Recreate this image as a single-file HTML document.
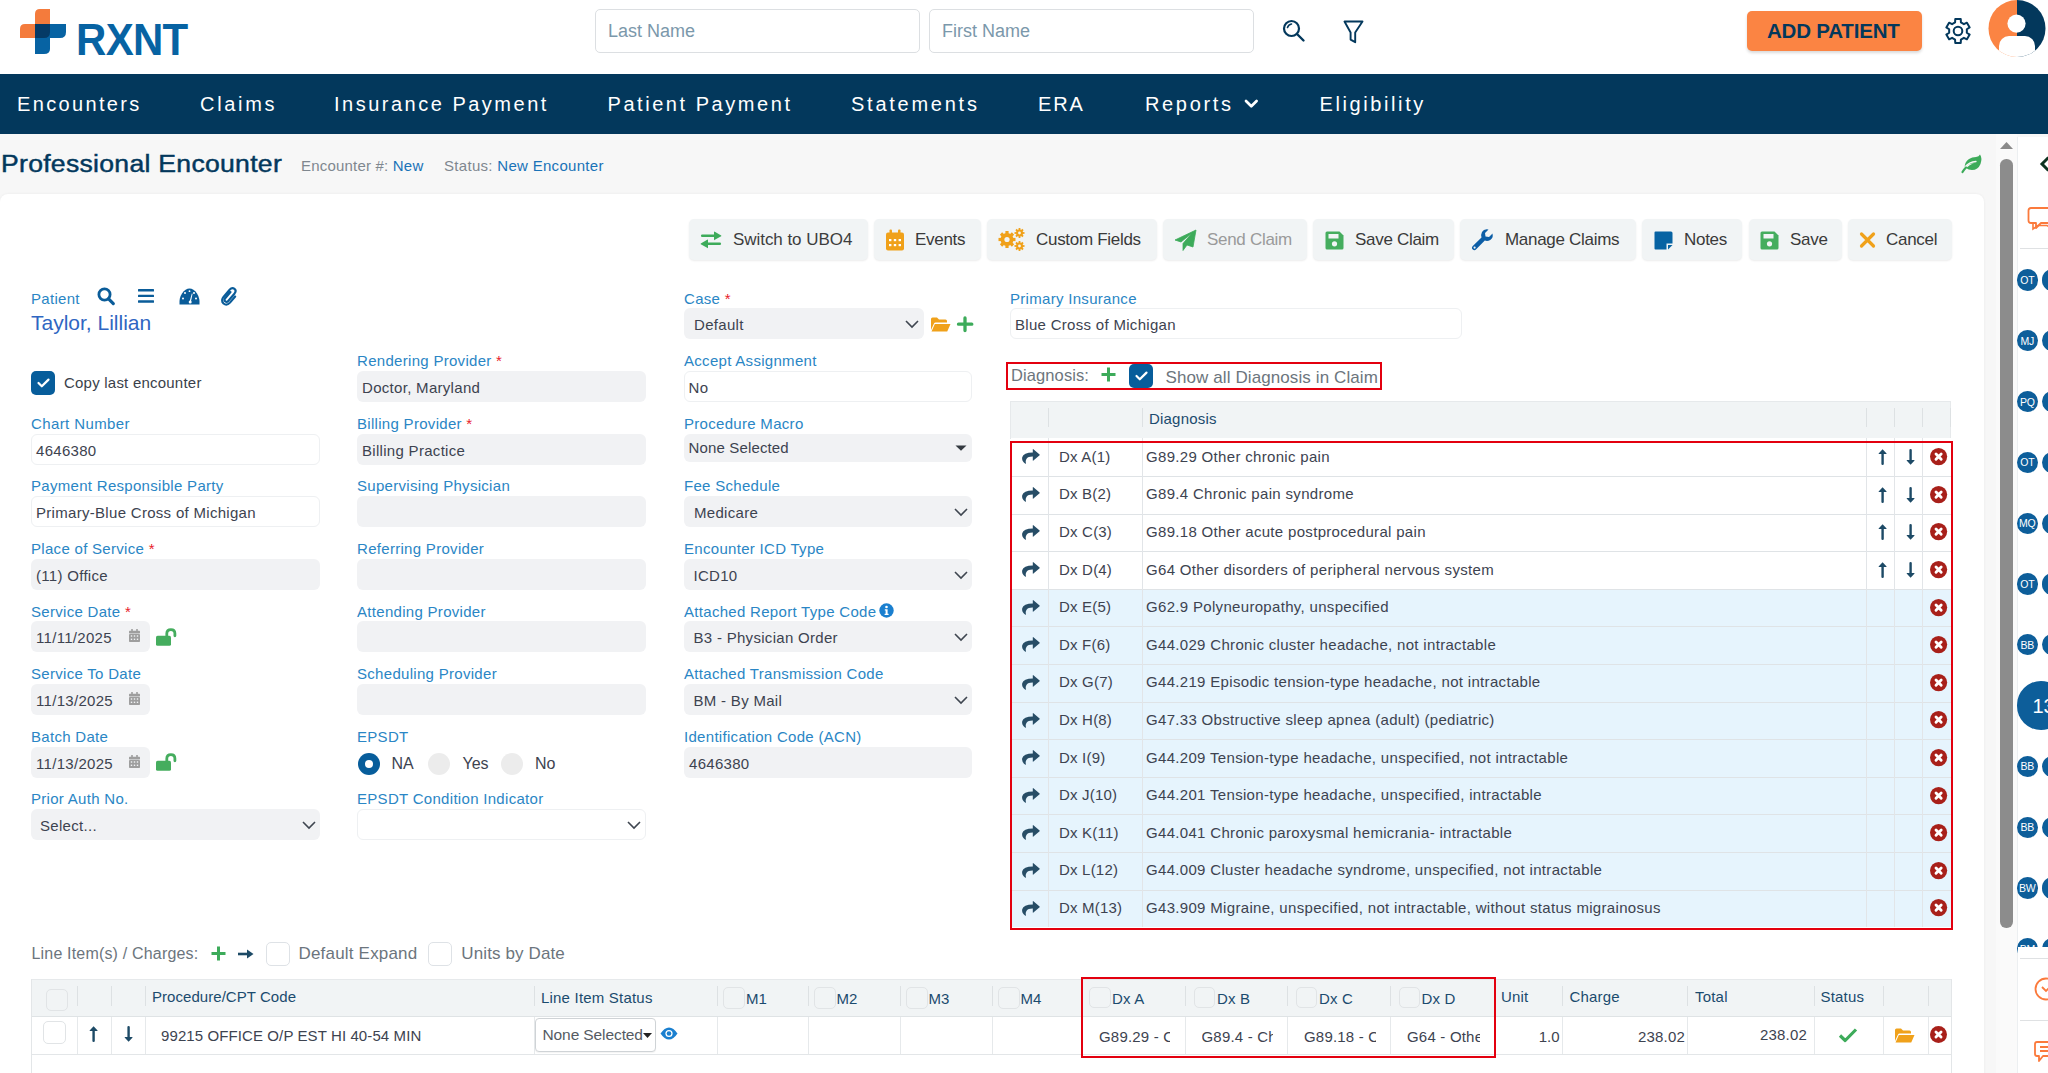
<!DOCTYPE html>
<html><head><meta charset="utf-8">
<style>
*{box-sizing:border-box;margin:0;padding:0}
html,body{width:2048px;height:1073px;overflow:hidden;background:#f7f7f7;font-family:"Liberation Sans",sans-serif;position:relative}
.a{position:absolute}
.t{position:absolute;white-space:nowrap;line-height:1}
svg{position:absolute;overflow:visible}
#hdr{left:0;top:0;width:2048px;height:74px;background:#fff}
#nav{left:0;top:74px;width:2048px;height:60px;background:#03385c}
.nv{color:#fff;font-size:20px;letter-spacing:1.85px;top:94px}
.inp{background:#fff;border:1px solid #dcdfe2;border-radius:5px}
.ph{color:#7b98ab;font-size:18px}
#card{left:0;top:194px;width:1984px;height:900px;background:#fff;border-radius:8px;box-shadow:0 0 3px rgba(0,0,0,.06)}
.btn{position:absolute;top:219px;height:41px;background:#f1f4f5;border-radius:5px;box-shadow:0 1px 2px rgba(0,0,0,.08)}
.bt{color:#3a3a3a;font-size:17px;top:231px;letter-spacing:-0.3px}
.lbl{color:#2a86c5;font-size:15px}
.req{color:#e8202a;font-size:15px}
.box{position:absolute;height:31px;border-radius:6px;background:#f1f2f4}
.wbox{position:absolute;height:31px;border-radius:6px;background:#fff;border:1px solid #eef0f2}
.val{color:#3d4350;font-size:15px}
.th{color:#1b4b6e;font-size:15px}
.dg{color:#3d4350;font-size:15px}
</style></head><body>
<!-- HEADER -->
<div id="hdr" class="a"></div>
<svg style="left:0;top:0" width="200" height="70">
  <path d="M35 24 V14 Q35 9 40 9 H50 V38 H20 V29 Q20 24 25 24 Z" fill="#f47b3c"/>
  <path d="M35 24 H66 V32 Q66 38 60 38 H50 V49 Q50 54 44 54 H35 Z" fill="#0763a3"/>
  <path d="M35 24 H50 V32 Q50 38 44 38 H35 Z" fill="#053a66"/>
</svg>
<div class="t" style="left:76px;top:17.5px;font-size:42px;font-weight:700;color:#0763a3;letter-spacing:-0.7px;transform:scaleY(1.07);transform-origin:0 0">RXNT</div>

<div class="a inp" style="left:595px;top:9px;width:325px;height:44px"></div>
<div class="t ph" style="left:608px;top:22px">Last Name</div>
<div class="a inp" style="left:929px;top:9px;width:325px;height:44px"></div>
<div class="t ph" style="left:942px;top:22px">First Name</div>

<!-- search icon -->
<svg style="left:1282px;top:19px" width="24" height="24" viewBox="0 0 24 24"><circle cx="9.5" cy="9.5" r="7.5" fill="none" stroke="#03385c" stroke-width="2.2"/><path d="M15 15 L21.5 21.5" stroke="#03385c" stroke-width="2.4" stroke-linecap="round"/><path d="M5.5 8.5 Q6.5 5.5 9.5 5" fill="none" stroke="#03385c" stroke-width="1.6" stroke-linecap="round"/></svg>
<!-- filter icon -->
<svg style="left:1343px;top:20px" width="22" height="24" viewBox="0 0 22 24"><path d="M1.5 1.5 H19.5 L12.2 12.5 V22.2 L7.6 19.6 V12.5 Z" fill="none" stroke="#03385c" stroke-width="1.9" stroke-linejoin="round"/></svg>

<div class="a" style="left:1747px;top:11px;width:175px;height:40px;background:#fb8443;border-radius:5px;box-shadow:0 2px 3px rgba(0,0,0,.15)"></div>
<div class="t" style="left:1767px;top:20.8px;font-size:20.5px;font-weight:700;color:#03385c;letter-spacing:-0.2px">ADD PATIENT</div>

<!-- gear -->
<svg style="left:1945px;top:18px" width="26" height="26" viewBox="0 0 26 26"><path d="M10.07 4.49 L10.26 1.11 L15.74 1.11 L15.93 4.49 L18.90 6.21 L21.92 4.68 L24.67 9.43 L21.83 11.28 L21.83 14.72 L24.67 16.57 L21.92 21.32 L18.90 19.79 L15.93 21.51 L15.74 24.89 L10.26 24.89 L10.07 21.51 L7.10 19.79 L4.08 21.32 L1.33 16.57 L4.17 14.72 L4.17 11.28 L1.33 9.43 L4.08 4.68 L7.10 6.21 Z" fill="none" stroke="#03385c" stroke-width="2" stroke-linejoin="round"/><circle cx="13" cy="13" r="4.3" fill="none" stroke="#03385c" stroke-width="2"/></svg>
<!-- avatar -->
<svg style="left:1987px;top:0px" width="61" height="58" viewBox="0 0 61 58">
  <defs><clipPath id="avc"><circle cx="30" cy="28.5" r="28.5"/></clipPath></defs>
  <g clip-path="url(#avc)">
    <rect x="0" y="0" width="30" height="58" fill="#fb8443"/>
    <rect x="30" y="0" width="31" height="58" fill="#03385c"/>
    <circle cx="29.5" cy="23.6" r="9.1" fill="#fff"/>
    <rect x="12" y="36" width="36" height="30" rx="10" fill="#fff"/>
  </g>
</svg>

<!-- NAV -->
<div id="nav" class="a"></div>
<div class="t nv" style="left:17px;letter-spacing:2.35px">Encounters</div>
<div class="t nv" style="left:200px;letter-spacing:2.7px">Claims</div>
<div class="t nv" style="left:334px;letter-spacing:2.5px">Insurance Payment</div>
<div class="t nv" style="left:607.5px;letter-spacing:2.55px">Patient Payment</div>
<div class="t nv" style="left:851px;letter-spacing:2.75px">Statements</div>
<div class="t nv" style="left:1038px">ERA</div>
<div class="t nv" style="left:1145px;letter-spacing:2.65px">Reports</div>
<svg style="left:1244px;top:98.5px" width="15" height="10" viewBox="0 0 15 10"><path d="M2 2 L7.3 7.3 L12.6 2" fill="none" stroke="#fff" stroke-width="2.7" stroke-linecap="round" stroke-linejoin="round"/></svg>
<div class="t nv" style="left:1319.5px;letter-spacing:2.6px">Eligibility</div>

<!-- TITLE -->
<div class="t" style="left:1px;top:153.2px;font-size:23px;font-weight:400;-webkit-text-stroke:0.45px #03385c;color:#03385c;letter-spacing:0.25px;transform:scaleX(1.155);transform-origin:0 0">Professional Encounter</div>
<div class="t" style="left:301px;top:157.5px;font-size:15px;color:#7f878f;letter-spacing:0.2px">Encounter #: <span style="color:#1a73b8">New</span></div>
<div class="t" style="left:444px;top:157.5px;font-size:15px;color:#7f878f;letter-spacing:0.3px">Status: <span style="color:#1a73b8">New Encounter</span></div>

<!-- CARD -->
<div id="card" class="a"></div>

<!--TOOLBAR-->
<div class="btn" style="left:689px;width:179px"></div>
<svg style="left:700px;top:229px" width="22" height="22" viewBox="0 0 22 22"><path d="M2.2 6.8 H16" stroke="#3dab5a" stroke-width="2.5" stroke-linecap="round"/><path d="M14 2.6 Q14 2.2 14.4 2.4 L21.2 6.4 Q21.6 6.8 21.2 7.2 L14.4 11.1 Q14 11.3 14 10.9 Z" fill="#3dab5a"/><path d="M6 14.8 H19.8" stroke="#3dab5a" stroke-width="2.5" stroke-linecap="round"/><path d="M8 10.7 Q8 10.3 7.6 10.5 L0.8 14.4 Q0.4 14.8 0.8 15.2 L7.6 19.1 Q8 19.3 8 18.9 Z" fill="#3dab5a"/></svg>
<div class="t bt" style="left:733px;letter-spacing:-0.05px;color:#3d3d3d">Switch to UBO4</div>

<div class="btn" style="left:874px;width:107px"></div>
<svg style="left:885px;top:229px" width="20" height="22" viewBox="0 0 20 22"><rect x="1" y="3.5" width="18" height="18" rx="2" fill="#f0a11a"/><rect x="4.5" y="0.5" width="2.5" height="5" rx="1" fill="#f0a11a"/><rect x="13" y="0.5" width="2.5" height="5" rx="1" fill="#f0a11a"/><g fill="#fff"><rect x="4" y="10" width="2.4" height="2.2"/><rect x="8.8" y="10" width="2.4" height="2.2"/><rect x="13.6" y="10" width="2.4" height="2.2"/><rect x="4" y="15" width="2.4" height="2.2"/><rect x="8.8" y="15" width="2.4" height="2.2"/><rect x="13.6" y="15" width="2.4" height="2.2"/></g></svg>
<div class="t bt" style="left:915px">Events</div>

<div class="btn" style="left:987px;width:170px"></div>
<svg style="left:998px;top:228px" width="27" height="23" viewBox="0 0 27 23"><g fill="#f0a11a"><circle cx="9" cy="11.5" r="6.5"/><g stroke="#f0a11a" stroke-width="3.2" stroke-linecap="butt"><path d="M9 3 V20"/><path d="M0.5 11.5 H17.5"/><path d="M3 5.5 L15 17.5"/><path d="M15 5.5 L3 17.5"/></g><circle cx="21.5" cy="5" r="3.5"/><circle cx="21.5" cy="18" r="3.5"/><g stroke="#f0a11a" stroke-width="1.8"><path d="M21.5 0 V10"/><path d="M16.5 5 H26.5"/><path d="M18 1.5 L25 8.5"/><path d="M25 1.5 L18 8.5"/><path d="M21.5 13 V23"/><path d="M16.5 18 H26.5"/><path d="M18 14.5 L25 21.5"/><path d="M25 14.5 L18 21.5"/></g></g><circle cx="9" cy="11.5" r="2.6" fill="#f1f4f5"/><circle cx="21.5" cy="5" r="1.4" fill="#f1f4f5"/><circle cx="21.5" cy="18" r="1.4" fill="#f1f4f5"/></svg>
<div class="t bt" style="left:1036px">Custom Fields</div>

<div class="btn" style="left:1163px;width:144px"></div>
<svg style="left:1174px;top:229px" width="23" height="22" viewBox="0 0 23 22"><path d="M22 1 L1 11 L7 13 L18 4 L9 14.5 V21.5 L13 16 L19 18 Z" fill="#3dab5a" stroke="#3dab5a" stroke-width="0.8" stroke-linejoin="round"/></svg>
<div class="t bt" style="left:1207px;color:#9a9a9a">Send Claim</div>

<div class="btn" style="left:1313px;width:141px"></div>
<svg style="left:1325px;top:231px" width="19" height="19" viewBox="0 0 19 19"><path d="M2 0.5 H14.5 L18.5 4.5 V17 Q18.5 18.5 17 18.5 H2 Q0.5 18.5 0.5 17 V2 Q0.5 0.5 2 0.5 Z" fill="#45ad5e"/><rect x="3.5" y="3" width="10" height="4.5" fill="#f1f4f5"/><circle cx="9.5" cy="12.8" r="2.6" fill="#f1f4f5"/></svg>
<div class="t bt" style="left:1355px">Save Claim</div>

<div class="btn" style="left:1460px;width:176px"></div>
<svg style="left:1471px;top:229px" width="23" height="22" viewBox="0 0 23 22"><path d="M21.5 4.5 L18 8 L14.5 7.5 L14 4 L17.5 0.5 Q13 -0.5 11 3 Q9.5 6 10.5 8.5 L1.8 17 Q0 19 1.8 20.5 Q3.5 22 5.2 20.2 L13.8 11.5 Q16.5 12.5 19.2 11 Q22.5 9 21.5 4.5 Z" fill="#0d5ea6"/><circle cx="3.6" cy="18.6" r="1.1" fill="#f1f4f5"/></svg>
<div class="t bt" style="left:1505px">Manage Claims</div>

<div class="btn" style="left:1642px;width:100px"></div>
<svg style="left:1654px;top:231px" width="19" height="19" viewBox="0 0 19 19"><path d="M1.5 0.5 H17 Q18.5 0.5 18.5 2 V12.5 H12.5 V18.5 H1.5 Q0.5 18.5 0.5 17.5 V1.5 Q0.5 0.5 1.5 0.5 Z" fill="#0763a3"/><path d="M14 14 H18.5 L14 18.5 Z" fill="#0763a3"/></svg>
<div class="t bt" style="left:1684px">Notes</div>

<div class="btn" style="left:1749px;width:93px"></div>
<svg style="left:1760px;top:231px" width="19" height="19" viewBox="0 0 19 19"><path d="M2 0.5 H14.5 L18.5 4.5 V17 Q18.5 18.5 17 18.5 H2 Q0.5 18.5 0.5 17 V2 Q0.5 0.5 2 0.5 Z" fill="#45ad5e"/><rect x="3.5" y="3" width="10" height="4.5" fill="#f1f4f5"/><circle cx="9.5" cy="12.8" r="2.6" fill="#f1f4f5"/></svg>
<div class="t bt" style="left:1790px">Save</div>

<div class="btn" style="left:1848px;width:104px"></div>
<svg style="left:1859px;top:232px" width="17" height="16" viewBox="0 0 17 16"><path d="M2.5 2 L14.5 14 M14.5 2 L2.5 14" stroke="#f0a11a" stroke-width="3.2" stroke-linecap="round"/></svg>
<div class="t bt" style="left:1886px">Cancel</div>


<!--FORM-->
<div class="t lbl" style="left:31px;top:290.6px;letter-spacing:0.3px">Patient</div>
<svg style="left:97px;top:287px" width="18" height="19" viewBox="0 0 18 19"><circle cx="7.5" cy="7.5" r="5.6" fill="none" stroke="#0a5c99" stroke-width="2.8"/><path d="M11.6 11.8 L16.3 16.6" stroke="#0a5c99" stroke-width="3.2" stroke-linecap="round"/></svg>
<svg style="left:138px;top:289px" width="17" height="14" viewBox="0 0 17 14"><rect x="0" y="0" width="16" height="2.4" rx="0.5" fill="#0a5c99"/><rect x="0" y="5.7" width="16" height="2.4" rx="0.5" fill="#0a5c99"/><rect x="0" y="11.3" width="16" height="2.4" rx="0.5" fill="#0a5c99"/></svg>
<svg style="left:179px;top:288px" width="21" height="17" viewBox="0 0 21 17"><path d="M0.5 16.5 Q0 10 3 5.5 Q6.5 0.5 10.5 0.5 Q14.5 0.5 18 5.5 Q21 10 20.5 16.5 Z" fill="#0a5c99"/><g fill="#fff"><circle cx="4" cy="10.5" r="1"/><circle cx="6" cy="5" r="1"/><circle cx="15" cy="5" r="1"/><circle cx="17" cy="10.5" r="1"/><circle cx="10.5" cy="3.2" r="0.9"/><path d="M10.6 13.5 L12.8 5.5 L13.6 5.7 L11.9 13.8 Z"/><circle cx="11.2" cy="14" r="1.5"/></g></svg>
<svg style="left:221px;top:287px" width="17" height="19" viewBox="0 0 17 19"><path d="M9.5 5 L4 11.5 Q2.8 13.2 4.3 14.5 Q5.8 15.6 7.2 14 L13.6 6.5 Q15.8 3.5 13.5 1.8 Q11 0 8.6 2.7 L2.5 9.8 Q-0.5 13.5 2.5 16.5 Q5.7 19.2 9 15.6 L14.2 9.5" fill="none" stroke="#0a5c99" stroke-width="2.1" stroke-linecap="round"/></svg>
<div class="t" style="left:31px;top:312.4px;font-size:21px;color:#2f66c2;letter-spacing:0px">Taylor, Lillian</div>
<div class="a" style="left:31px;top:371px;width:24px;height:24px;border-radius:5px;background:#075d9b"></div>
<svg style="left:37px;top:378px" width="13" height="10" viewBox="0 0 13 10"><path d="M1.5 5 L4.8 8.3 L11.5 1.6" fill="none" stroke="#fff" stroke-width="2.2" stroke-linecap="round" stroke-linejoin="round"/></svg>
<div class="t" style="left:64px;top:375.3px;font-size:15px;color:#3a3f4a;letter-spacing:0.22px">Copy last encounter</div>
<div class="t lbl" style="left:31px;top:415.8px;letter-spacing:0.4px">Chart Number</div>
<div class="wbox" style="left:31px;top:433.5px;width:289px"></div>
<div class="t val" style="left:36px;top:442.6px;letter-spacing:0.3px">4646380</div>
<div class="t lbl" style="left:31px;top:478.4px;letter-spacing:0.3px">Payment Responsible Party</div>
<div class="wbox" style="left:31px;top:496.1px;width:289px"></div>
<div class="t val" style="left:36px;top:505.2px;letter-spacing:0.3px">Primary-Blue Cross of Michigan</div>
<div class="t lbl" style="left:31px;top:541.0px;letter-spacing:0.3px">Place of Service<span class="req"> *</span></div>
<div class="box" style="left:31px;top:558.7px;width:289px"></div>
<div class="t val" style="left:36px;top:567.8px;letter-spacing:0.3px">(11) Office</div>
<div class="t lbl" style="left:31px;top:603.6px;letter-spacing:0.3px">Service Date<span class="req"> *</span></div>
<div class="box" style="left:31px;top:621.3px;width:119px"></div>
<div class="t val" style="left:36px;top:630.4px;letter-spacing:0.3px">11/11/2025</div>
<svg style="left:129px;top:629.3px" width="11" height="13" viewBox="0 0 11 13"><rect x="0" y="1.8" width="11" height="2.6" rx="0.6" fill="#9e9e9e"/><rect x="2.2" y="0" width="1.6" height="2.6" fill="#9e9e9e"/><rect x="7.2" y="0" width="1.6" height="2.6" fill="#9e9e9e"/><rect x="0" y="5" width="11" height="8" rx="0.8" fill="#9e9e9e"/><g fill="#f1f2f4"><rect x="1.8" y="6.3" width="1.4" height="1.4"/><rect x="4.8" y="6.3" width="1.4" height="1.4"/><rect x="7.8" y="6.3" width="1.4" height="1.4"/><rect x="1.8" y="9.6" width="1.4" height="1.4"/><rect x="4.8" y="9.6" width="1.4" height="1.4"/><rect x="7.8" y="9.6" width="1.4" height="1.4"/></g></svg>
<svg style="left:156px;top:627.6px" width="21" height="18" viewBox="0 0 21 18"><rect x="0" y="7.8" width="15" height="10" rx="1.6" fill="#45ad5e"/><path d="M10.8 8 V5.5 Q10.8 1.6 14.9 1.6 Q18.9 1.6 18.9 5.5 V7.8" fill="none" stroke="#45ad5e" stroke-width="2.8" stroke-linecap="round"/></svg>
<div class="t lbl" style="left:31px;top:666.2px;letter-spacing:0.3px">Service To Date</div>
<div class="box" style="left:31px;top:683.9px;width:119px"></div>
<div class="t val" style="left:36px;top:693.0px;letter-spacing:0.3px">11/13/2025</div>
<svg style="left:129px;top:691.9px" width="11" height="13" viewBox="0 0 11 13"><rect x="0" y="1.8" width="11" height="2.6" rx="0.6" fill="#9e9e9e"/><rect x="2.2" y="0" width="1.6" height="2.6" fill="#9e9e9e"/><rect x="7.2" y="0" width="1.6" height="2.6" fill="#9e9e9e"/><rect x="0" y="5" width="11" height="8" rx="0.8" fill="#9e9e9e"/><g fill="#f1f2f4"><rect x="1.8" y="6.3" width="1.4" height="1.4"/><rect x="4.8" y="6.3" width="1.4" height="1.4"/><rect x="7.8" y="6.3" width="1.4" height="1.4"/><rect x="1.8" y="9.6" width="1.4" height="1.4"/><rect x="4.8" y="9.6" width="1.4" height="1.4"/><rect x="7.8" y="9.6" width="1.4" height="1.4"/></g></svg>
<div class="t lbl" style="left:31px;top:728.8px;letter-spacing:0.3px">Batch Date</div>
<div class="box" style="left:31px;top:746.5px;width:119px"></div>
<div class="t val" style="left:36px;top:755.6px;letter-spacing:0.3px">11/13/2025</div>
<svg style="left:129px;top:754.5px" width="11" height="13" viewBox="0 0 11 13"><rect x="0" y="1.8" width="11" height="2.6" rx="0.6" fill="#9e9e9e"/><rect x="2.2" y="0" width="1.6" height="2.6" fill="#9e9e9e"/><rect x="7.2" y="0" width="1.6" height="2.6" fill="#9e9e9e"/><rect x="0" y="5" width="11" height="8" rx="0.8" fill="#9e9e9e"/><g fill="#f1f2f4"><rect x="1.8" y="6.3" width="1.4" height="1.4"/><rect x="4.8" y="6.3" width="1.4" height="1.4"/><rect x="7.8" y="6.3" width="1.4" height="1.4"/><rect x="1.8" y="9.6" width="1.4" height="1.4"/><rect x="4.8" y="9.6" width="1.4" height="1.4"/><rect x="7.8" y="9.6" width="1.4" height="1.4"/></g></svg>
<svg style="left:156px;top:752.8px" width="21" height="18" viewBox="0 0 21 18"><rect x="0" y="7.8" width="15" height="10" rx="1.6" fill="#45ad5e"/><path d="M10.8 8 V5.5 Q10.8 1.6 14.9 1.6 Q18.9 1.6 18.9 5.5 V7.8" fill="none" stroke="#45ad5e" stroke-width="2.8" stroke-linecap="round"/></svg>
<div class="t lbl" style="left:31px;top:791.4px;letter-spacing:0.3px">Prior Auth No.</div>
<div class="box" style="left:31px;top:809.1px;width:289px"></div>
<div class="t val" style="left:40px;top:818.2px;letter-spacing:0.3px">Select...</div>
<svg style="left:302px;top:821.1px" width="14" height="8" viewBox="0 0 14 8"><path d="M1 1 L7 7 L13 1" fill="none" stroke="#3f4650" stroke-width="1.6" stroke-linejoin="miter"/></svg>
<div class="t lbl" style="left:357px;top:353.2px;letter-spacing:0.3px">Rendering Provider<span class="req"> *</span></div>
<div class="box" style="left:357px;top:370.9px;width:289px"></div>
<div class="t val" style="left:362px;top:380.0px;letter-spacing:0.3px">Doctor, Maryland</div>
<div class="t lbl" style="left:357px;top:415.8px;letter-spacing:0.3px">Billing Provider<span class="req"> *</span></div>
<div class="box" style="left:357px;top:433.5px;width:289px"></div>
<div class="t val" style="left:362px;top:442.6px;letter-spacing:0.3px">Billing Practice</div>
<div class="t lbl" style="left:357px;top:478.4px;letter-spacing:0.3px">Supervising Physician</div>
<div class="box" style="left:357px;top:496.1px;width:289px"></div>
<div class="t lbl" style="left:357px;top:541.0px;letter-spacing:0.3px">Referring Provider</div>
<div class="box" style="left:357px;top:558.7px;width:289px"></div>
<div class="t lbl" style="left:357px;top:603.6px;letter-spacing:0.3px">Attending Provider</div>
<div class="box" style="left:357px;top:621.3px;width:289px"></div>
<div class="t lbl" style="left:357px;top:666.2px;letter-spacing:0.3px">Scheduling Provider</div>
<div class="box" style="left:357px;top:683.9px;width:289px"></div>
<div class="t lbl" style="left:357px;top:728.8px;letter-spacing:0.3px">EPSDT</div>
<div class="a" style="left:357.5px;top:752.5px;width:22px;height:22px;border-radius:50%;background:#075d9b"></div>
<div class="a" style="left:364.5px;top:759.5px;width:8px;height:8px;border-radius:50%;background:#fff"></div>
<div class="t val" style="left:391.5px;top:756.6px;font-size:16px;top:755.8px">NA</div>
<div class="a" style="left:428px;top:752.5px;width:22px;height:22px;border-radius:50%;background:#ececec"></div>
<div class="t val" style="left:462.5px;top:755.8px;font-size:16px">Yes</div>
<div class="a" style="left:501px;top:752.5px;width:22px;height:22px;border-radius:50%;background:#ececec"></div>
<div class="t val" style="left:535px;top:755.8px;font-size:16px">No</div>
<div class="t lbl" style="left:357px;top:791.4px;letter-spacing:0.3px">EPSDT Condition Indicator</div>
<div class="wbox" style="left:357px;top:809.1px;width:289px"></div>
<svg style="left:627px;top:821.1px" width="14" height="8" viewBox="0 0 14 8"><path d="M1 1 L7 7 L13 1" fill="none" stroke="#3f4650" stroke-width="1.6" stroke-linejoin="miter"/></svg>
<div class="t lbl" style="left:684px;top:290.6px;letter-spacing:0.3px">Case<span class="req"> *</span></div>
<div class="box" style="left:684px;top:308.3px;width:240px"></div>
<div class="t val" style="left:694px;top:317.4px;letter-spacing:0.3px">Default</div>
<svg style="left:905px;top:320.3px" width="14" height="8" viewBox="0 0 14 8"><path d="M1 1 L7 7 L13 1" fill="none" stroke="#3f4650" stroke-width="1.6" stroke-linejoin="miter"/></svg>
<svg style="left:931px;top:317.1px" width="20" height="15" viewBox="0 0 20 15"><path d="M0 2 Q0 0.5 1.5 0.5 H6 L8 2.5 H14.5 Q16 2.5 16 4 V5.5 H4.5 Q3.5 5.5 3 6.5 L0 13 Z" fill="#f0a11a"/><path d="M3.8 7 H19.5 L16.2 14.5 H0.5 Z" fill="#f0a11a"/></svg>
<svg style="left:957px;top:316.3px" width="16" height="16" viewBox="0 0 16 16"><path d="M8 2 V14.5 M1.5 8.2 H14.8" stroke="#3dab5a" stroke-width="3.3" stroke-linecap="round"/></svg>
<div class="t lbl" style="left:684px;top:353.2px;letter-spacing:0.3px">Accept Assignment</div>
<div class="wbox" style="left:684px;top:370.9px;width:288px"></div>
<div class="t val" style="left:688.5px;top:380.0px;letter-spacing:0.3px">No</div>
<div class="t lbl" style="left:684px;top:415.8px;letter-spacing:0.3px">Procedure Macro</div>
<div class="box" style="left:684px;top:433.8px;width:288px;height:28px"></div>
<div class="t val" style="left:688.5px;top:440.3px;letter-spacing:0.15px">None Selected</div>
<svg style="left:955px;top:444.5px" width="12" height="6" viewBox="0 0 12 6"><path d="M0.5 0.5 H11.5 L6 5.8 Z" fill="#343a40"/></svg>
<div class="t lbl" style="left:684px;top:478.4px;letter-spacing:0.3px">Fee Schedule</div>
<div class="box" style="left:684px;top:496.1px;width:288px"></div>
<div class="t val" style="left:694px;top:505.2px;letter-spacing:0.3px">Medicare</div>
<svg style="left:954px;top:508.1px" width="14" height="8" viewBox="0 0 14 8"><path d="M1 1 L7 7 L13 1" fill="none" stroke="#3f4650" stroke-width="1.6" stroke-linejoin="miter"/></svg>
<div class="t lbl" style="left:684px;top:541.0px;letter-spacing:0.3px">Encounter ICD Type</div>
<div class="box" style="left:684px;top:558.7px;width:288px"></div>
<div class="t val" style="left:693.5px;top:567.8px;letter-spacing:0.3px">ICD10</div>
<svg style="left:954px;top:570.7px" width="14" height="8" viewBox="0 0 14 8"><path d="M1 1 L7 7 L13 1" fill="none" stroke="#3f4650" stroke-width="1.6" stroke-linejoin="miter"/></svg>
<div class="t lbl" style="left:684px;top:603.6px;letter-spacing:0.3px">Attached Report Type Code</div>
<div class="box" style="left:684px;top:621.3px;width:288px"></div>
<div class="t val" style="left:693.5px;top:630.4px;letter-spacing:0.3px">B3 - Physician Order</div>
<svg style="left:954px;top:633.3px" width="14" height="8" viewBox="0 0 14 8"><path d="M1 1 L7 7 L13 1" fill="none" stroke="#3f4650" stroke-width="1.6" stroke-linejoin="miter"/></svg>
<svg style="left:879px;top:603.1px" width="15" height="15" viewBox="0 0 15 15"><circle cx="7.5" cy="7.5" r="7.2" fill="#1a7fcf"/><circle cx="7.5" cy="4" r="1.3" fill="#fff"/><path d="M5.8 6.3 H8.6 V10.8 H9.6 V12 H5.6 V10.8 H6.6 V7.5 H5.8 Z" fill="#fff"/></svg>
<div class="t lbl" style="left:684px;top:666.2px;letter-spacing:0.3px">Attached Transmission Code</div>
<div class="box" style="left:684px;top:683.9px;width:288px"></div>
<div class="t val" style="left:693.5px;top:693.0px;letter-spacing:0.3px">BM - By Mail</div>
<svg style="left:954px;top:695.9px" width="14" height="8" viewBox="0 0 14 8"><path d="M1 1 L7 7 L13 1" fill="none" stroke="#3f4650" stroke-width="1.6" stroke-linejoin="miter"/></svg>
<div class="t lbl" style="left:684px;top:728.8px;letter-spacing:0.3px">Identification Code (ACN)</div>
<div class="box" style="left:684px;top:746.5px;width:288px"></div>
<div class="t val" style="left:689px;top:755.6px;letter-spacing:0.3px">4646380</div>
<div class="t lbl" style="left:1010px;top:290.6px;letter-spacing:0.3px">Primary Insurance</div>
<div class="wbox" style="left:1010px;top:308.3px;width:452px"></div>
<div class="t val" style="left:1015px;top:317.4px;letter-spacing:0.3px">Blue Cross of Michigan</div>
<!--DIAG-->
<div class="a" style="left:1005.5px;top:361.5px;width:376.5px;height:28px;border:2px solid #e3000f"></div>
<div class="t" style="left:1011px;top:367px;font-size:16.5px;color:#6c757d;letter-spacing:0.1px">Diagnosis:</div>
<svg style="left:1101px;top:367px" width="15" height="15" viewBox="0 0 15 15"><path d="M7.5 0.5 V14.5 M0.5 7.5 H14.5" stroke="#3dab5a" stroke-width="3"/></svg>
<div class="a" style="left:1129px;top:364.3px;width:24px;height:23.5px;border-radius:5px;background:#075d9b"></div>
<svg style="left:1134.5px;top:371px" width="13" height="10" viewBox="0 0 13 10"><path d="M1.5 5 L4.8 8.3 L11.5 1.6" fill="none" stroke="#fff" stroke-width="2.2" stroke-linecap="round" stroke-linejoin="round"/></svg>
<div class="t" style="left:1165.5px;top:368.5px;font-size:17px;color:#6c757d;letter-spacing:0.1px">Show all Diagnosis in Claim</div>
<div class="a" style="left:1010px;top:401px;width:941px;height:38px;background:#f1f4f5;border:1px solid #e6e9eb;border-bottom-color:#dfe3e5"></div>
<div class="a" style="left:1047.5px;top:408px;width:1px;height:18.5px;background:#dde1e3"></div>
<div class="a" style="left:1141.5px;top:408px;width:1px;height:18.5px;background:#dde1e3"></div>
<div class="a" style="left:1865.5px;top:408px;width:1px;height:18.5px;background:#dde1e3"></div>
<div class="a" style="left:1894px;top:408px;width:1px;height:18.5px;background:#dde1e3"></div>
<div class="a" style="left:1922px;top:408px;width:1px;height:18.5px;background:#dde1e3"></div>
<div class="a" style="left:1950px;top:408px;width:1px;height:18.5px;background:#dde1e3"></div>
<div class="t th" style="left:1149px;top:411px;letter-spacing:0.2px">Diagnosis</div>
<div class="a" style="left:1011px;top:438.4px;width:940px;height:150.4px;background:#fff"></div>
<div class="a" style="left:1011px;top:588.8px;width:940px;height:338.4px;background:#e6f4fd"></div>
<div class="a" style="left:1011px;top:476.0px;width:940px;height:1px;background:#dfe3e6"></div>
<div class="a" style="left:1011px;top:513.6px;width:940px;height:1px;background:#dfe3e6"></div>
<div class="a" style="left:1011px;top:551.2px;width:940px;height:1px;background:#dfe3e6"></div>
<div class="a" style="left:1011px;top:588.8px;width:940px;height:1px;background:#dfe3e6"></div>
<div class="a" style="left:1011px;top:626.4px;width:940px;height:1px;background:#dfe3e6"></div>
<div class="a" style="left:1011px;top:664.0px;width:940px;height:1px;background:#dfe3e6"></div>
<div class="a" style="left:1011px;top:701.6px;width:940px;height:1px;background:#dfe3e6"></div>
<div class="a" style="left:1011px;top:739.2px;width:940px;height:1px;background:#dfe3e6"></div>
<div class="a" style="left:1011px;top:776.8px;width:940px;height:1px;background:#dfe3e6"></div>
<div class="a" style="left:1011px;top:814.4px;width:940px;height:1px;background:#dfe3e6"></div>
<div class="a" style="left:1011px;top:852.0px;width:940px;height:1px;background:#dfe3e6"></div>
<div class="a" style="left:1011px;top:889.6px;width:940px;height:1px;background:#dfe3e6"></div>
<div class="a" style="left:1047.5px;top:438.4px;width:1px;height:488.8px;background:#e2e5e8"></div>
<div class="a" style="left:1141.5px;top:438.4px;width:1px;height:488.8px;background:#e2e5e8"></div>
<div class="a" style="left:1865.5px;top:438.4px;width:1px;height:488.8px;background:#e2e5e8"></div>
<div class="a" style="left:1894px;top:438.4px;width:1px;height:488.8px;background:#e2e5e8"></div>
<div class="a" style="left:1922px;top:438.4px;width:1px;height:488.8px;background:#e2e5e8"></div>
<svg style="left:1022px;top:449.4px" width="18" height="15" viewBox="0 0 18 15"><path d="M10.8 0.2 Q11 -0.2 11.4 0.2 L17.6 5.5 Q18 5.9 17.6 6.3 L11.4 11.5 Q11 11.9 10.8 11.4 V7.6 Q6.2 7.5 4.4 10 Q3.2 11.8 3.9 14.2 Q4 14.9 3.3 14.7 Q-0.6 12 0.2 8.3 Q1.4 3.7 10.8 3.6 Z" fill="#274d66"/></svg>
<div class="t dg" style="left:1059px;top:448.7px;letter-spacing:0.2px">Dx A(1)</div>
<div class="t dg" style="left:1146px;top:448.7px;letter-spacing:0.32px">G89.29 Other chronic pain</div>
<svg style="left:1877.5px;top:449.1px" width="9.2" height="16" viewBox="0 0 9.2 16"><path d="M4.6 0.2 L8.6 4.6 Q8.8 5 8.3 5 H5.8 V15 Q5.8 16 4.6 16 Q3.4 16 3.4 15 V5 H0.9 Q0.4 5 0.6 4.6 Z" fill="#1d4a66"/></svg>
<svg style="left:1906px;top:449.1px" width="9.2" height="16" viewBox="0 0 9.2 16"><path d="M4.6 15.8 L8.6 11.4 Q8.8 11 8.3 11 H5.8 V1 Q5.8 0 4.6 0 Q3.4 0 3.4 1 V11 H0.9 Q0.4 11 0.6 11.4 Z" fill="#1d4a66"/></svg>
<svg style="left:1929.8px;top:448.1px" width="17.2" height="17.2" viewBox="0 0 18 18"><circle cx="9" cy="9" r="9" fill="#a8201a"/><path d="M6.3 6.3 L11.7 11.7 M11.7 6.3 L6.3 11.7" stroke="#fff" stroke-width="3" stroke-linecap="round"/></svg>
<svg style="left:1022px;top:487.0px" width="18" height="15" viewBox="0 0 18 15"><path d="M10.8 0.2 Q11 -0.2 11.4 0.2 L17.6 5.5 Q18 5.9 17.6 6.3 L11.4 11.5 Q11 11.9 10.8 11.4 V7.6 Q6.2 7.5 4.4 10 Q3.2 11.8 3.9 14.2 Q4 14.9 3.3 14.7 Q-0.6 12 0.2 8.3 Q1.4 3.7 10.8 3.6 Z" fill="#274d66"/></svg>
<div class="t dg" style="left:1059px;top:486.3px;letter-spacing:0.2px">Dx B(2)</div>
<div class="t dg" style="left:1146px;top:486.3px;letter-spacing:0.32px">G89.4 Chronic pain syndrome</div>
<svg style="left:1877.5px;top:486.7px" width="9.2" height="16" viewBox="0 0 9.2 16"><path d="M4.6 0.2 L8.6 4.6 Q8.8 5 8.3 5 H5.8 V15 Q5.8 16 4.6 16 Q3.4 16 3.4 15 V5 H0.9 Q0.4 5 0.6 4.6 Z" fill="#1d4a66"/></svg>
<svg style="left:1906px;top:486.7px" width="9.2" height="16" viewBox="0 0 9.2 16"><path d="M4.6 15.8 L8.6 11.4 Q8.8 11 8.3 11 H5.8 V1 Q5.8 0 4.6 0 Q3.4 0 3.4 1 V11 H0.9 Q0.4 11 0.6 11.4 Z" fill="#1d4a66"/></svg>
<svg style="left:1929.8px;top:485.7px" width="17.2" height="17.2" viewBox="0 0 18 18"><circle cx="9" cy="9" r="9" fill="#a8201a"/><path d="M6.3 6.3 L11.7 11.7 M11.7 6.3 L6.3 11.7" stroke="#fff" stroke-width="3" stroke-linecap="round"/></svg>
<svg style="left:1022px;top:524.6px" width="18" height="15" viewBox="0 0 18 15"><path d="M10.8 0.2 Q11 -0.2 11.4 0.2 L17.6 5.5 Q18 5.9 17.6 6.3 L11.4 11.5 Q11 11.9 10.8 11.4 V7.6 Q6.2 7.5 4.4 10 Q3.2 11.8 3.9 14.2 Q4 14.9 3.3 14.7 Q-0.6 12 0.2 8.3 Q1.4 3.7 10.8 3.6 Z" fill="#274d66"/></svg>
<div class="t dg" style="left:1059px;top:523.9px;letter-spacing:0.2px">Dx C(3)</div>
<div class="t dg" style="left:1146px;top:523.9px;letter-spacing:0.32px">G89.18 Other acute postprocedural pain</div>
<svg style="left:1877.5px;top:524.3px" width="9.2" height="16" viewBox="0 0 9.2 16"><path d="M4.6 0.2 L8.6 4.6 Q8.8 5 8.3 5 H5.8 V15 Q5.8 16 4.6 16 Q3.4 16 3.4 15 V5 H0.9 Q0.4 5 0.6 4.6 Z" fill="#1d4a66"/></svg>
<svg style="left:1906px;top:524.3px" width="9.2" height="16" viewBox="0 0 9.2 16"><path d="M4.6 15.8 L8.6 11.4 Q8.8 11 8.3 11 H5.8 V1 Q5.8 0 4.6 0 Q3.4 0 3.4 1 V11 H0.9 Q0.4 11 0.6 11.4 Z" fill="#1d4a66"/></svg>
<svg style="left:1929.8px;top:523.3px" width="17.2" height="17.2" viewBox="0 0 18 18"><circle cx="9" cy="9" r="9" fill="#a8201a"/><path d="M6.3 6.3 L11.7 11.7 M11.7 6.3 L6.3 11.7" stroke="#fff" stroke-width="3" stroke-linecap="round"/></svg>
<svg style="left:1022px;top:562.2px" width="18" height="15" viewBox="0 0 18 15"><path d="M10.8 0.2 Q11 -0.2 11.4 0.2 L17.6 5.5 Q18 5.9 17.6 6.3 L11.4 11.5 Q11 11.9 10.8 11.4 V7.6 Q6.2 7.5 4.4 10 Q3.2 11.8 3.9 14.2 Q4 14.9 3.3 14.7 Q-0.6 12 0.2 8.3 Q1.4 3.7 10.8 3.6 Z" fill="#274d66"/></svg>
<div class="t dg" style="left:1059px;top:561.5px;letter-spacing:0.2px">Dx D(4)</div>
<div class="t dg" style="left:1146px;top:561.5px;letter-spacing:0.32px">G64 Other disorders of peripheral nervous system</div>
<svg style="left:1877.5px;top:561.9px" width="9.2" height="16" viewBox="0 0 9.2 16"><path d="M4.6 0.2 L8.6 4.6 Q8.8 5 8.3 5 H5.8 V15 Q5.8 16 4.6 16 Q3.4 16 3.4 15 V5 H0.9 Q0.4 5 0.6 4.6 Z" fill="#1d4a66"/></svg>
<svg style="left:1906px;top:561.9px" width="9.2" height="16" viewBox="0 0 9.2 16"><path d="M4.6 15.8 L8.6 11.4 Q8.8 11 8.3 11 H5.8 V1 Q5.8 0 4.6 0 Q3.4 0 3.4 1 V11 H0.9 Q0.4 11 0.6 11.4 Z" fill="#1d4a66"/></svg>
<svg style="left:1929.8px;top:560.9px" width="17.2" height="17.2" viewBox="0 0 18 18"><circle cx="9" cy="9" r="9" fill="#a8201a"/><path d="M6.3 6.3 L11.7 11.7 M11.7 6.3 L6.3 11.7" stroke="#fff" stroke-width="3" stroke-linecap="round"/></svg>
<svg style="left:1022px;top:599.8px" width="18" height="15" viewBox="0 0 18 15"><path d="M10.8 0.2 Q11 -0.2 11.4 0.2 L17.6 5.5 Q18 5.9 17.6 6.3 L11.4 11.5 Q11 11.9 10.8 11.4 V7.6 Q6.2 7.5 4.4 10 Q3.2 11.8 3.9 14.2 Q4 14.9 3.3 14.7 Q-0.6 12 0.2 8.3 Q1.4 3.7 10.8 3.6 Z" fill="#274d66"/></svg>
<div class="t dg" style="left:1059px;top:599.1px;letter-spacing:0.2px">Dx E(5)</div>
<div class="t dg" style="left:1146px;top:599.1px;letter-spacing:0.32px">G62.9 Polyneuropathy, unspecified</div>
<svg style="left:1929.8px;top:598.5px" width="17.2" height="17.2" viewBox="0 0 18 18"><circle cx="9" cy="9" r="9" fill="#a8201a"/><path d="M6.3 6.3 L11.7 11.7 M11.7 6.3 L6.3 11.7" stroke="#fff" stroke-width="3" stroke-linecap="round"/></svg>
<svg style="left:1022px;top:637.4px" width="18" height="15" viewBox="0 0 18 15"><path d="M10.8 0.2 Q11 -0.2 11.4 0.2 L17.6 5.5 Q18 5.9 17.6 6.3 L11.4 11.5 Q11 11.9 10.8 11.4 V7.6 Q6.2 7.5 4.4 10 Q3.2 11.8 3.9 14.2 Q4 14.9 3.3 14.7 Q-0.6 12 0.2 8.3 Q1.4 3.7 10.8 3.6 Z" fill="#274d66"/></svg>
<div class="t dg" style="left:1059px;top:636.7px;letter-spacing:0.2px">Dx F(6)</div>
<div class="t dg" style="left:1146px;top:636.7px;letter-spacing:0.32px">G44.029 Chronic cluster headache, not intractable</div>
<svg style="left:1929.8px;top:636.1px" width="17.2" height="17.2" viewBox="0 0 18 18"><circle cx="9" cy="9" r="9" fill="#a8201a"/><path d="M6.3 6.3 L11.7 11.7 M11.7 6.3 L6.3 11.7" stroke="#fff" stroke-width="3" stroke-linecap="round"/></svg>
<svg style="left:1022px;top:675.0px" width="18" height="15" viewBox="0 0 18 15"><path d="M10.8 0.2 Q11 -0.2 11.4 0.2 L17.6 5.5 Q18 5.9 17.6 6.3 L11.4 11.5 Q11 11.9 10.8 11.4 V7.6 Q6.2 7.5 4.4 10 Q3.2 11.8 3.9 14.2 Q4 14.9 3.3 14.7 Q-0.6 12 0.2 8.3 Q1.4 3.7 10.8 3.6 Z" fill="#274d66"/></svg>
<div class="t dg" style="left:1059px;top:674.3px;letter-spacing:0.2px">Dx G(7)</div>
<div class="t dg" style="left:1146px;top:674.3px;letter-spacing:0.32px">G44.219 Episodic tension-type headache, not intractable</div>
<svg style="left:1929.8px;top:673.7px" width="17.2" height="17.2" viewBox="0 0 18 18"><circle cx="9" cy="9" r="9" fill="#a8201a"/><path d="M6.3 6.3 L11.7 11.7 M11.7 6.3 L6.3 11.7" stroke="#fff" stroke-width="3" stroke-linecap="round"/></svg>
<svg style="left:1022px;top:712.6px" width="18" height="15" viewBox="0 0 18 15"><path d="M10.8 0.2 Q11 -0.2 11.4 0.2 L17.6 5.5 Q18 5.9 17.6 6.3 L11.4 11.5 Q11 11.9 10.8 11.4 V7.6 Q6.2 7.5 4.4 10 Q3.2 11.8 3.9 14.2 Q4 14.9 3.3 14.7 Q-0.6 12 0.2 8.3 Q1.4 3.7 10.8 3.6 Z" fill="#274d66"/></svg>
<div class="t dg" style="left:1059px;top:711.9px;letter-spacing:0.2px">Dx H(8)</div>
<div class="t dg" style="left:1146px;top:711.9px;letter-spacing:0.32px">G47.33 Obstructive sleep apnea (adult) (pediatric)</div>
<svg style="left:1929.8px;top:711.3px" width="17.2" height="17.2" viewBox="0 0 18 18"><circle cx="9" cy="9" r="9" fill="#a8201a"/><path d="M6.3 6.3 L11.7 11.7 M11.7 6.3 L6.3 11.7" stroke="#fff" stroke-width="3" stroke-linecap="round"/></svg>
<svg style="left:1022px;top:750.2px" width="18" height="15" viewBox="0 0 18 15"><path d="M10.8 0.2 Q11 -0.2 11.4 0.2 L17.6 5.5 Q18 5.9 17.6 6.3 L11.4 11.5 Q11 11.9 10.8 11.4 V7.6 Q6.2 7.5 4.4 10 Q3.2 11.8 3.9 14.2 Q4 14.9 3.3 14.7 Q-0.6 12 0.2 8.3 Q1.4 3.7 10.8 3.6 Z" fill="#274d66"/></svg>
<div class="t dg" style="left:1059px;top:749.5px;letter-spacing:0.2px">Dx I(9)</div>
<div class="t dg" style="left:1146px;top:749.5px;letter-spacing:0.32px">G44.209 Tension-type headache, unspecified, not intractable</div>
<svg style="left:1929.8px;top:748.9px" width="17.2" height="17.2" viewBox="0 0 18 18"><circle cx="9" cy="9" r="9" fill="#a8201a"/><path d="M6.3 6.3 L11.7 11.7 M11.7 6.3 L6.3 11.7" stroke="#fff" stroke-width="3" stroke-linecap="round"/></svg>
<svg style="left:1022px;top:787.8px" width="18" height="15" viewBox="0 0 18 15"><path d="M10.8 0.2 Q11 -0.2 11.4 0.2 L17.6 5.5 Q18 5.9 17.6 6.3 L11.4 11.5 Q11 11.9 10.8 11.4 V7.6 Q6.2 7.5 4.4 10 Q3.2 11.8 3.9 14.2 Q4 14.9 3.3 14.7 Q-0.6 12 0.2 8.3 Q1.4 3.7 10.8 3.6 Z" fill="#274d66"/></svg>
<div class="t dg" style="left:1059px;top:787.1px;letter-spacing:0.2px">Dx J(10)</div>
<div class="t dg" style="left:1146px;top:787.1px;letter-spacing:0.32px">G44.201 Tension-type headache, unspecified, intractable</div>
<svg style="left:1929.8px;top:786.5px" width="17.2" height="17.2" viewBox="0 0 18 18"><circle cx="9" cy="9" r="9" fill="#a8201a"/><path d="M6.3 6.3 L11.7 11.7 M11.7 6.3 L6.3 11.7" stroke="#fff" stroke-width="3" stroke-linecap="round"/></svg>
<svg style="left:1022px;top:825.4px" width="18" height="15" viewBox="0 0 18 15"><path d="M10.8 0.2 Q11 -0.2 11.4 0.2 L17.6 5.5 Q18 5.9 17.6 6.3 L11.4 11.5 Q11 11.9 10.8 11.4 V7.6 Q6.2 7.5 4.4 10 Q3.2 11.8 3.9 14.2 Q4 14.9 3.3 14.7 Q-0.6 12 0.2 8.3 Q1.4 3.7 10.8 3.6 Z" fill="#274d66"/></svg>
<div class="t dg" style="left:1059px;top:824.7px;letter-spacing:0.2px">Dx K(11)</div>
<div class="t dg" style="left:1146px;top:824.7px;letter-spacing:0.32px">G44.041 Chronic paroxysmal hemicrania- intractable</div>
<svg style="left:1929.8px;top:824.1px" width="17.2" height="17.2" viewBox="0 0 18 18"><circle cx="9" cy="9" r="9" fill="#a8201a"/><path d="M6.3 6.3 L11.7 11.7 M11.7 6.3 L6.3 11.7" stroke="#fff" stroke-width="3" stroke-linecap="round"/></svg>
<svg style="left:1022px;top:863.0px" width="18" height="15" viewBox="0 0 18 15"><path d="M10.8 0.2 Q11 -0.2 11.4 0.2 L17.6 5.5 Q18 5.9 17.6 6.3 L11.4 11.5 Q11 11.9 10.8 11.4 V7.6 Q6.2 7.5 4.4 10 Q3.2 11.8 3.9 14.2 Q4 14.9 3.3 14.7 Q-0.6 12 0.2 8.3 Q1.4 3.7 10.8 3.6 Z" fill="#274d66"/></svg>
<div class="t dg" style="left:1059px;top:862.3px;letter-spacing:0.2px">Dx L(12)</div>
<div class="t dg" style="left:1146px;top:862.3px;letter-spacing:0.32px">G44.009 Cluster headache syndrome, unspecified, not intractable</div>
<svg style="left:1929.8px;top:861.7px" width="17.2" height="17.2" viewBox="0 0 18 18"><circle cx="9" cy="9" r="9" fill="#a8201a"/><path d="M6.3 6.3 L11.7 11.7 M11.7 6.3 L6.3 11.7" stroke="#fff" stroke-width="3" stroke-linecap="round"/></svg>
<svg style="left:1022px;top:900.6px" width="18" height="15" viewBox="0 0 18 15"><path d="M10.8 0.2 Q11 -0.2 11.4 0.2 L17.6 5.5 Q18 5.9 17.6 6.3 L11.4 11.5 Q11 11.9 10.8 11.4 V7.6 Q6.2 7.5 4.4 10 Q3.2 11.8 3.9 14.2 Q4 14.9 3.3 14.7 Q-0.6 12 0.2 8.3 Q1.4 3.7 10.8 3.6 Z" fill="#274d66"/></svg>
<div class="t dg" style="left:1059px;top:899.9px;letter-spacing:0.2px">Dx M(13)</div>
<div class="t dg" style="left:1146px;top:899.9px;letter-spacing:0.32px">G43.909 Migraine, unspecified, not intractable, without status migrainosus</div>
<svg style="left:1929.8px;top:899.3px" width="17.2" height="17.2" viewBox="0 0 18 18"><circle cx="9" cy="9" r="9" fill="#a8201a"/><path d="M6.3 6.3 L11.7 11.7 M11.7 6.3 L6.3 11.7" stroke="#fff" stroke-width="3" stroke-linecap="round"/></svg>
<div class="a" style="left:1010px;top:440.6px;width:943px;height:489.4px;border:2px solid #e3000f"></div>
<!--LINES-->
<div class="t" style="left:31.5px;top:945.9px;font-size:16px;color:#6c757d;letter-spacing:0.18px;">Line Item(s) / Charges:</div>
<svg style="left:211px;top:946px" width="15" height="15" viewBox="0 0 15 15"><path d="M7.5 0.5 V14.5 M0.5 7.5 H14.5" stroke="#3dab5a" stroke-width="3"/></svg>
<svg style="left:238px;top:949px" width="16" height="10" viewBox="0 0 16 10"><path d="M0 5 H10" stroke="#1d4a66" stroke-width="2.6"/><path d="M9 0.5 L15.5 5 L9 9.5 Z" fill="#1d4a66"/></svg>
<div class="a" style="left:266px;top:942px;width:24px;height:24px;border-radius:5px;border:1px solid #dee2e6;background:#fff"></div>
<div class="t" style="left:298.5px;top:945.3px;font-size:17px;color:#6c757d;letter-spacing:0.19px;">Default Expand</div>
<div class="a" style="left:428px;top:942px;width:24px;height:24px;border-radius:5px;border:1px solid #dee2e6;background:#fff"></div>
<div class="t" style="left:461.3px;top:945.3px;font-size:17px;color:#6c757d;letter-spacing:0.12px;">Units by Date</div>
<div class="a" style="left:31px;top:979px;width:1920px;height:37.5px;background:#f1f4f5;border-top:1px solid #e6e9eb;border-bottom:1px solid #dfe3e5"></div>
<div class="a" style="left:31px;top:979px;width:1px;height:100px;background:#e3e6e8"></div>
<div class="a" style="left:1950.5px;top:979px;width:1px;height:100px;background:#e3e6e8"></div>
<div class="a" style="left:31px;top:1053.8px;width:1920px;height:1px;background:#e3e6e8"></div>
<div class="a" style="left:77px;top:986px;width:1px;height:20px;background:#dde1e3"></div>
<div class="a" style="left:77px;top:1016.5px;width:1px;height:37.5px;background:#e6e9eb"></div>
<div class="a" style="left:111px;top:986px;width:1px;height:20px;background:#dde1e3"></div>
<div class="a" style="left:111px;top:1016.5px;width:1px;height:37.5px;background:#e6e9eb"></div>
<div class="a" style="left:145px;top:986px;width:1px;height:20px;background:#dde1e3"></div>
<div class="a" style="left:145px;top:1016.5px;width:1px;height:37.5px;background:#e6e9eb"></div>
<div class="a" style="left:534px;top:986px;width:1px;height:20px;background:#dde1e3"></div>
<div class="a" style="left:534px;top:1016.5px;width:1px;height:37.5px;background:#e6e9eb"></div>
<div class="a" style="left:717px;top:986px;width:1px;height:20px;background:#dde1e3"></div>
<div class="a" style="left:717px;top:1016.5px;width:1px;height:37.5px;background:#e6e9eb"></div>
<div class="a" style="left:807.5px;top:986px;width:1px;height:20px;background:#dde1e3"></div>
<div class="a" style="left:807.5px;top:1016.5px;width:1px;height:37.5px;background:#e6e9eb"></div>
<div class="a" style="left:899.5px;top:986px;width:1px;height:20px;background:#dde1e3"></div>
<div class="a" style="left:899.5px;top:1016.5px;width:1px;height:37.5px;background:#e6e9eb"></div>
<div class="a" style="left:991.5px;top:986px;width:1px;height:20px;background:#dde1e3"></div>
<div class="a" style="left:991.5px;top:1016.5px;width:1px;height:37.5px;background:#e6e9eb"></div>
<div class="a" style="left:1080.5px;top:986px;width:1px;height:20px;background:#dde1e3"></div>
<div class="a" style="left:1080.5px;top:1016.5px;width:1px;height:37.5px;background:#e6e9eb"></div>
<div class="a" style="left:1185.4px;top:986px;width:1px;height:20px;background:#dde1e3"></div>
<div class="a" style="left:1185.4px;top:1016.5px;width:1px;height:37.5px;background:#e6e9eb"></div>
<div class="a" style="left:1287.4px;top:986px;width:1px;height:20px;background:#dde1e3"></div>
<div class="a" style="left:1287.4px;top:1016.5px;width:1px;height:37.5px;background:#e6e9eb"></div>
<div class="a" style="left:1390px;top:986px;width:1px;height:20px;background:#dde1e3"></div>
<div class="a" style="left:1390px;top:1016.5px;width:1px;height:37.5px;background:#e6e9eb"></div>
<div class="a" style="left:1495px;top:986px;width:1px;height:20px;background:#dde1e3"></div>
<div class="a" style="left:1495px;top:1016.5px;width:1px;height:37.5px;background:#e6e9eb"></div>
<div class="a" style="left:1562.4px;top:986px;width:1px;height:20px;background:#dde1e3"></div>
<div class="a" style="left:1562.4px;top:1016.5px;width:1px;height:37.5px;background:#e6e9eb"></div>
<div class="a" style="left:1687.4px;top:986px;width:1px;height:20px;background:#dde1e3"></div>
<div class="a" style="left:1687.4px;top:1016.5px;width:1px;height:37.5px;background:#e6e9eb"></div>
<div class="a" style="left:1813.6px;top:986px;width:1px;height:20px;background:#dde1e3"></div>
<div class="a" style="left:1813.6px;top:1016.5px;width:1px;height:37.5px;background:#e6e9eb"></div>
<div class="a" style="left:1882.5px;top:986px;width:1px;height:20px;background:#dde1e3"></div>
<div class="a" style="left:1882.5px;top:1016.5px;width:1px;height:37.5px;background:#e6e9eb"></div>
<div class="a" style="left:1928.4px;top:986px;width:1px;height:20px;background:#dde1e3"></div>
<div class="a" style="left:1928.4px;top:1016.5px;width:1px;height:37.5px;background:#e6e9eb"></div>
<div class="a" style="left:46px;top:989px;width:22px;height:22px;border-radius:5px;border:1px solid #e1e4e6;background:#f1f4f5"></div>
<div class="t" style="left:152px;top:989.3px;font-size:15px;color:#1b4b6e;letter-spacing:0.05px;">Procedure/CPT Code</div>
<div class="t" style="left:541px;top:989.8px;font-size:15px;color:#1b4b6e;letter-spacing:0.2px;">Line Item Status</div>
<div class="a" style="left:723px;top:986.5px;width:22px;height:22px;border-radius:5px;border:1px solid #e1e4e6;background:#f1f4f5"></div>
<div class="t" style="left:746px;top:990.7px;font-size:15px;color:#1b4b6e;letter-spacing:0.1px;">M1</div>
<div class="a" style="left:813.5px;top:986.5px;width:22px;height:22px;border-radius:5px;border:1px solid #e1e4e6;background:#f1f4f5"></div>
<div class="t" style="left:836.5px;top:990.7px;font-size:15px;color:#1b4b6e;letter-spacing:0.1px;">M2</div>
<div class="a" style="left:905.5px;top:986.5px;width:22px;height:22px;border-radius:5px;border:1px solid #e1e4e6;background:#f1f4f5"></div>
<div class="t" style="left:928.5px;top:990.7px;font-size:15px;color:#1b4b6e;letter-spacing:0.1px;">M3</div>
<div class="a" style="left:997.5px;top:986.5px;width:22px;height:22px;border-radius:5px;border:1px solid #e1e4e6;background:#f1f4f5"></div>
<div class="t" style="left:1020.5px;top:990.7px;font-size:15px;color:#1b4b6e;letter-spacing:0.1px;">M4</div>
<div class="a" style="left:1089.0px;top:986.5px;width:21.5px;height:21.5px;border-radius:5px;border:1px solid #e1e4e6;background:#f1f4f5"></div>
<div class="t" style="left:1112.0px;top:990.7px;font-size:15px;color:#1b4b6e;letter-spacing:0.2px;">Dx A</div>
<div class="a" style="left:1193.9px;top:986.5px;width:21.5px;height:21.5px;border-radius:5px;border:1px solid #e1e4e6;background:#f1f4f5"></div>
<div class="t" style="left:1216.9px;top:990.7px;font-size:15px;color:#1b4b6e;letter-spacing:0.2px;">Dx B</div>
<div class="a" style="left:1295.9px;top:986.5px;width:21.5px;height:21.5px;border-radius:5px;border:1px solid #e1e4e6;background:#f1f4f5"></div>
<div class="t" style="left:1318.9px;top:990.7px;font-size:15px;color:#1b4b6e;letter-spacing:0.2px;">Dx C</div>
<div class="a" style="left:1398.5px;top:986.5px;width:21.5px;height:21.5px;border-radius:5px;border:1px solid #e1e4e6;background:#f1f4f5"></div>
<div class="t" style="left:1421.5px;top:990.7px;font-size:15px;color:#1b4b6e;letter-spacing:0.2px;">Dx D</div>
<div class="t" style="left:1501px;top:989.3px;font-size:15px;color:#1b4b6e;letter-spacing:0.2px;">Unit</div>
<div class="t" style="left:1569.5px;top:989.3px;font-size:15px;color:#1b4b6e;letter-spacing:0.2px;">Charge</div>
<div class="t" style="left:1695px;top:989.3px;font-size:15px;color:#1b4b6e;letter-spacing:0.2px;">Total</div>
<div class="t" style="left:1820.5px;top:989.3px;font-size:15px;color:#1b4b6e;letter-spacing:0.2px;">Status</div>
<div class="a" style="left:43px;top:1021px;width:22.5px;height:22.5px;border-radius:5px;border:1px solid #e1e4e6;background:#fff"></div>
<svg style="left:89px;top:1026px" width="9.2" height="16" viewBox="0 0 9.2 16"><path d="M4.6 0.2 L8.6 4.6 Q8.8 5 8.3 5 H5.8 V15 Q5.8 16 4.6 16 Q3.4 16 3.4 15 V5 H0.9 Q0.4 5 0.6 4.6 Z" fill="#1d4a66"/></svg>
<svg style="left:124px;top:1026px" width="9.2" height="16" viewBox="0 0 9.2 16"><path d="M4.6 15.8 L8.6 11.4 Q8.8 11 8.3 11 H5.8 V1 Q5.8 0 4.6 0 Q3.4 0 3.4 1 V11 H0.9 Q0.4 11 0.6 11.4 Z" fill="#1d4a66"/></svg>
<div class="t" style="left:161px;top:1028.3px;font-size:15px;color:#3d4350;letter-spacing:0.1px;">99215 OFFICE O/P EST HI 40-54 MIN</div>
<div class="a" style="left:534.5px;top:1017.5px;width:121px;height:34px;border-radius:4px;border:1px solid #cfd3d6;background:#fff;box-shadow:0 1px 1px rgba(0,0,0,.05)"></div>
<div class="t" style="left:542.5px;top:1027.4px;font-size:15.5px;color:#555b63;letter-spacing:-0.1px;">None Selected</div>
<svg style="left:643px;top:1033px" width="9" height="5" viewBox="0 0 9 5"><path d="M0 0 H9 L4.5 5 Z" fill="#222"/></svg>
<svg style="left:660px;top:1027px" width="18" height="13" viewBox="0 0 18 13"><path d="M0.5 6.5 Q4.5 0.5 9 0.5 Q13.5 0.5 17.5 6.5 Q13.5 12.5 9 12.5 Q4.5 12.5 0.5 6.5 Z" fill="#1a7fcf"/><circle cx="9" cy="6.5" r="3.6" fill="#fff"/><circle cx="9" cy="6.5" r="2.3" fill="#1a7fcf"/></svg>
<div class="a" style="left:1099px;top:1020px;width:71px;height:30px;overflow:hidden"><div class="t" style="left:0;top:8.5px;font-size:15px;color:#3d4350;letter-spacing:0.2px">G89.29 - Other chronic pain</div></div>
<div class="a" style="left:1201.5px;top:1020px;width:71.5px;height:30px;overflow:hidden"><div class="t" style="left:0;top:8.5px;font-size:15px;color:#3d4350;letter-spacing:0.2px">G89.4 - Chronic pain</div></div>
<div class="a" style="left:1304px;top:1020px;width:72px;height:30px;overflow:hidden"><div class="t" style="left:0;top:8.5px;font-size:15px;color:#3d4350;letter-spacing:0.2px">G89.18 - Other</div></div>
<div class="a" style="left:1407px;top:1020px;width:72.5px;height:30px;overflow:hidden"><div class="t" style="left:0;top:8.5px;font-size:15px;color:#3d4350;letter-spacing:0.2px">G64 - Other</div></div>
<div class="t" style="right:488.5px;top:1028.9px;font-size:15px;color:#3d4350;letter-spacing:0px">1.0</div>
<div class="t" style="right:363px;top:1028.9px;font-size:15px;color:#3d4350;letter-spacing:0.2px">238.02</div>
<div class="t" style="right:241px;top:1027.0px;font-size:15px;color:#3d4350;letter-spacing:0.2px">238.02</div>
<svg style="left:1839px;top:1028px" width="18" height="14" viewBox="0 0 18 14"><path d="M1 7.5 L6.2 12.5 L17 1.5" fill="none" stroke="#3dab5a" stroke-width="3.2" stroke-linejoin="round"/></svg>
<svg style="left:1895px;top:1027.5px" width="20" height="15" viewBox="0 0 20 15"><path d="M0 2 Q0 0.5 1.5 0.5 H6 L8 2.5 H14.5 Q16 2.5 16 4 V5.5 H4.5 Q3.5 5.5 3 6.5 L0 13 Z" fill="#f0a11a"/><path d="M3.8 7 H19.5 L16.2 14.5 H0.5 Z" fill="#f0a11a"/></svg>
<svg style="left:1930.2px;top:1025.7px" width="17" height="17" viewBox="0 0 18 18"><circle cx="9" cy="9" r="9" fill="#a8201a"/><path d="M6.3 6.3 L11.7 11.7 M11.7 6.3 L6.3 11.7" stroke="#fff" stroke-width="3" stroke-linecap="round"/></svg>
<div class="a" style="left:1081px;top:977.3px;width:415px;height:80.3px;border:2px solid #e3000f"></div>
<!--SIDEBAR-->
<div class="a" style="left:1996px;top:134px;width:21px;height:939px;background:#fafafa"></div>
<svg style="left:2000px;top:142px" width="13" height="7" viewBox="0 0 13 7"><path d="M6.5 0 L13 7 H0 Z" fill="#8a8a8a"/></svg>
<div class="a" style="left:2000px;top:158.5px;width:12.5px;height:769.5px;border-radius:6.25px;background:#8c8c8c"></div>
<div class="a" style="left:2017px;top:137px;width:31px;height:936px;background:#fff;border-left:1px solid #eceff1"></div>
<svg style="left:2038px;top:156px" width="12" height="16" viewBox="0 0 12 16"><path d="M10.5 1.5 L4 8 L10.5 14.5" fill="none" stroke="#0d3320" stroke-width="3"/></svg>
<svg style="left:2026.5px;top:207px" width="30" height="26" viewBox="0 0 30 26"><path d="M4 1 H28 Q30 1 30 3 V14 Q30 16 28 16 H14 L9 21 V16 H4 Q1.5 16 1.5 13.5 V3.5 Q1.5 1 4 1 Z" fill="none" stroke="#fb7a3c" stroke-width="1.8" stroke-linejoin="round"/><path d="M6 17 L6 22 L11 18.5 H20 L24 21" fill="none" stroke="#fb7a3c" stroke-width="1.6"/></svg>
<div class="a" style="left:2020px;top:247.5px;width:28px;height:1px;background:#dfe1e3"></div>
<div class="a" style="left:2016.7px;top:269.4px;width:21.2px;height:21.2px;border-radius:50%;background:#0d5e9a"></div>
<div class="t" style="left:2016.7px;width:21.2px;text-align:center;top:275.0px;font-size:10.5px;color:#fff;letter-spacing:-0.3px">OT</div>
<div class="a" style="left:2042.4px;top:269.4px;width:21.2px;height:21.2px;border-radius:50%;background:#0d5e9a"></div>
<div class="a" style="left:2016.7px;top:330.2px;width:21.2px;height:21.2px;border-radius:50%;background:#0d5e9a"></div>
<div class="t" style="left:2016.7px;width:21.2px;text-align:center;top:335.8px;font-size:10.5px;color:#fff;letter-spacing:-0.3px">MJ</div>
<div class="a" style="left:2042.4px;top:330.2px;width:21.2px;height:21.2px;border-radius:50%;background:#0d5e9a"></div>
<div class="a" style="left:2016.7px;top:391.0px;width:21.2px;height:21.2px;border-radius:50%;background:#0d5e9a"></div>
<div class="t" style="left:2016.7px;width:21.2px;text-align:center;top:396.6px;font-size:10.5px;color:#fff;letter-spacing:-0.3px">PQ</div>
<div class="a" style="left:2042.4px;top:391.0px;width:21.2px;height:21.2px;border-radius:50%;background:#0d5e9a"></div>
<div class="a" style="left:2016.7px;top:451.8px;width:21.2px;height:21.2px;border-radius:50%;background:#0d5e9a"></div>
<div class="t" style="left:2016.7px;width:21.2px;text-align:center;top:457.4px;font-size:10.5px;color:#fff;letter-spacing:-0.3px">OT</div>
<div class="a" style="left:2042.4px;top:451.8px;width:21.2px;height:21.2px;border-radius:50%;background:#0d5e9a"></div>
<div class="a" style="left:2016.7px;top:512.6px;width:21.2px;height:21.2px;border-radius:50%;background:#0d5e9a"></div>
<div class="t" style="left:2016.7px;width:21.2px;text-align:center;top:518.2px;font-size:10.5px;color:#fff;letter-spacing:-0.3px">MQ</div>
<div class="a" style="left:2042.4px;top:512.6px;width:21.2px;height:21.2px;border-radius:50%;background:#0d5e9a"></div>
<div class="a" style="left:2016.7px;top:573.4px;width:21.2px;height:21.2px;border-radius:50%;background:#0d5e9a"></div>
<div class="t" style="left:2016.7px;width:21.2px;text-align:center;top:579.0px;font-size:10.5px;color:#fff;letter-spacing:-0.3px">OT</div>
<div class="a" style="left:2042.4px;top:573.4px;width:21.2px;height:21.2px;border-radius:50%;background:#0d5e9a"></div>
<div class="a" style="left:2016.7px;top:634.2px;width:21.2px;height:21.2px;border-radius:50%;background:#0d5e9a"></div>
<div class="t" style="left:2016.7px;width:21.2px;text-align:center;top:639.8px;font-size:10.5px;color:#fff;letter-spacing:-0.3px">BB</div>
<div class="a" style="left:2042.4px;top:634.2px;width:21.2px;height:21.2px;border-radius:50%;background:#0d5e9a"></div>
<div class="a" style="left:2016.7px;top:681.3px;width:48.6px;height:48.6px;border-radius:50%;background:#0d5e9a"></div>
<div class="t" style="left:2032.5px;top:695.7px;font-size:20px;color:#fff">13</div>
<div class="a" style="left:2016.7px;top:755.8px;width:21.2px;height:21.2px;border-radius:50%;background:#0d5e9a"></div>
<div class="t" style="left:2016.7px;width:21.2px;text-align:center;top:761.4px;font-size:10.5px;color:#fff;letter-spacing:-0.3px">BB</div>
<div class="a" style="left:2042.4px;top:755.8px;width:21.2px;height:21.2px;border-radius:50%;background:#0d5e9a"></div>
<div class="a" style="left:2016.7px;top:816.6px;width:21.2px;height:21.2px;border-radius:50%;background:#0d5e9a"></div>
<div class="t" style="left:2016.7px;width:21.2px;text-align:center;top:822.2px;font-size:10.5px;color:#fff;letter-spacing:-0.3px">BB</div>
<div class="a" style="left:2042.4px;top:816.6px;width:21.2px;height:21.2px;border-radius:50%;background:#0d5e9a"></div>
<div class="a" style="left:2016.7px;top:877.4px;width:21.2px;height:21.2px;border-radius:50%;background:#0d5e9a"></div>
<div class="t" style="left:2016.7px;width:21.2px;text-align:center;top:883.0px;font-size:10.5px;color:#fff;letter-spacing:-0.3px">BW</div>
<div class="a" style="left:2042.4px;top:877.4px;width:21.2px;height:21.2px;border-radius:50%;background:#0d5e9a"></div>
<div class="a" style="left:2016.7px;top:938.2px;width:21.2px;height:21.2px;border-radius:50%;background:#0d5e9a"></div>
<div class="t" style="left:2016.7px;width:21.2px;text-align:center;top:943.8px;font-size:10.5px;color:#fff;letter-spacing:-0.3px">BM</div>
<div class="a" style="left:2042.4px;top:938.2px;width:21.2px;height:21.2px;border-radius:50%;background:#0d5e9a"></div>
<div class="a" style="left:2018px;top:947px;width:30px;height:126px;background:#fff"></div>
<div class="a" style="left:2020px;top:958px;width:28px;height:1px;background:#dfe1e3"></div>
<svg style="left:2034px;top:977px" width="24" height="24" viewBox="0 0 24 24"><circle cx="12" cy="12" r="10.5" fill="none" stroke="#fb7a3c" stroke-width="1.8"/><path d="M8 10 L12 14 L17 9" fill="none" stroke="#fb7a3c" stroke-width="1.8"/></svg>
<div class="a" style="left:2020px;top:1020px;width:28px;height:1px;background:#dfe1e3"></div>
<svg style="left:2034px;top:1041px" width="24" height="24" viewBox="0 0 24 24"><path d="M3 1 H22 V15 H9 L5 20 V15 H3 Q1 15 1 13 V3 Q1 1 3 1 Z" fill="none" stroke="#fb7a3c" stroke-width="1.8" stroke-linejoin="round"/><path d="M6 6 H16 M6 10 H16" stroke="#fb7a3c" stroke-width="1.8"/></svg>
<svg style="left:1961px;top:154px" width="22" height="19" viewBox="0 0 22 19"><path d="M19 0.5 Q21.5 4 19.5 10 Q17 16 11 16 Q7.5 16 5 14 Q8 11 13 9 Q8 9.5 3.5 13 Q4 7.5 8 5 Q11 3 15 3 Q18 2.5 19 0.5 Z" fill="#3dab5a"/><path d="M15 7.5 Q8 8 4 13" fill="none" stroke="#f7f7f7" stroke-width="1.3" stroke-linecap="round"/><path d="M5 13.5 Q3 15.5 1.5 18" fill="none" stroke="#3dab5a" stroke-width="2.2" stroke-linecap="round"/></svg>
</body></html>
